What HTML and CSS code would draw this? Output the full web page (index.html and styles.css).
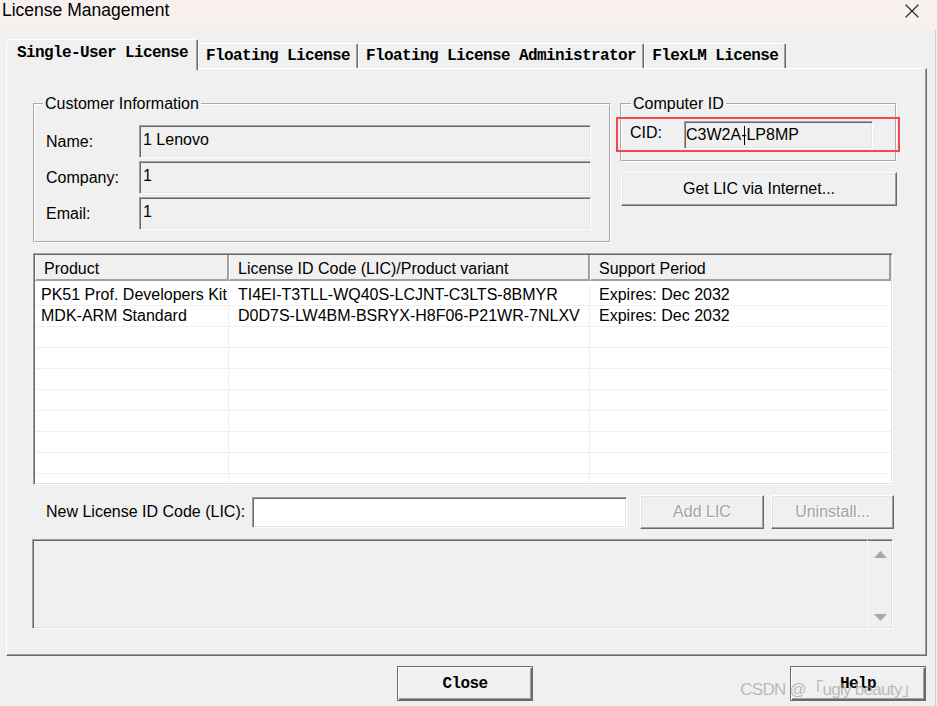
FILE: index.html
```html
<!DOCTYPE html>
<html lang="en">
<head>
<meta charset="utf-8">
<title>License Management</title>
<link rel="stylesheet" href="styles.css">
</head>
<body>
<div class="window">
  <header class="titlebar">
    <span class="title">License Management</span>
    <svg class="close-x" width="14" height="14" viewBox="0 0 14 14" aria-hidden="true"><path d="M0.6 0.6 L13.4 13.4 M13.4 0.6 L0.6 13.4" stroke="#1a1a1a" stroke-width="1.3" fill="none"/></svg>
  </header>
  <div class="client">
    <nav class="tabs">
      <div class="tab active">Single-User License</div>
      <div class="tab">Floating License</div>
      <div class="tab">Floating License Administrator</div>
      <div class="tab">FlexLM License</div>
    </nav>
    <section class="panel">
      <div class="top-row">
        <fieldset class="group customer">
          <legend>Customer Information</legend>
          <div class="form-row"><span class="lbl">Name:</span><div class="edit ro">1 Lenovo</div></div>
          <div class="form-row"><span class="lbl">Company:</span><div class="edit ro">1</div></div>
          <div class="form-row"><span class="lbl">Email:</span><div class="edit ro">1</div></div>
        </fieldset>
        <div class="right-col">
          <fieldset class="group computer">
            <legend>Computer ID</legend>
            <div class="cid-row">
              <span class="lbl cid-lbl">CID:</span>
              <div class="edit ro cid">C3W2A-<span class="caret"></span>LP8MP</div>
              <div class="highlight"></div>
            </div>
          </fieldset>
          <div class="btn get-lic">Get LIC via Internet...</div>
        </div>
      </div>

      <div class="listview">
        <div class="lv-head">
          <div class="lv-h col-product">Product</div>
          <div class="lv-h col-lic">License ID Code (LIC)/Product variant</div>
          <div class="lv-h col-support">Support Period</div>
        </div>
        <div class="lv-body">
          <div class="lv-row"><div class="lv-c col-product">PK51 Prof. Developers Kit</div><div class="lv-c col-lic">TI4EI-T3TLL-WQ40S-LCJNT-C3LTS-8BMYR</div><div class="lv-c col-support">Expires: Dec 2032</div></div>
          <div class="lv-row"><div class="lv-c col-product">MDK-ARM Standard</div><div class="lv-c col-lic">D0D7S-LW4BM-BSRYX-H8F06-P21WR-7NLXV</div><div class="lv-c col-support">Expires: Dec 2032</div></div>
          <div class="lv-row"><div class="lv-c col-product"></div><div class="lv-c col-lic"></div><div class="lv-c col-support"></div></div>
          <div class="lv-row"><div class="lv-c col-product"></div><div class="lv-c col-lic"></div><div class="lv-c col-support"></div></div>
          <div class="lv-row"><div class="lv-c col-product"></div><div class="lv-c col-lic"></div><div class="lv-c col-support"></div></div>
          <div class="lv-row"><div class="lv-c col-product"></div><div class="lv-c col-lic"></div><div class="lv-c col-support"></div></div>
          <div class="lv-row"><div class="lv-c col-product"></div><div class="lv-c col-lic"></div><div class="lv-c col-support"></div></div>
          <div class="lv-row"><div class="lv-c col-product"></div><div class="lv-c col-lic"></div><div class="lv-c col-support"></div></div>
          <div class="lv-row"><div class="lv-c col-product"></div><div class="lv-c col-lic"></div><div class="lv-c col-support"></div></div>
          <div class="lv-row"><div class="lv-c col-product"></div><div class="lv-c col-lic"></div><div class="lv-c col-support"></div></div>
        </div>
      </div>

      <div class="lic-row">
        <span class="lic-label">New License ID Code (LIC):</span>
        <div class="edit lic-input"></div>
        <div class="btn small">Add LIC</div>
        <div class="btn small">Uninstall...</div>
      </div>

      <div class="msgbox">
        <div class="msg-text"></div>
        <div class="scroll">
          <svg width="13" height="7" viewBox="0 0 13 7" aria-hidden="true"><polygon points="6.5,0 13,7 0,7" fill="#a8a8a8"/></svg>
          <svg width="13" height="7" viewBox="0 0 13 7" aria-hidden="true"><polygon points="0,0 13,0 6.5,7" fill="#a8a8a8"/></svg>
        </div>
      </div>
    </section>

    <div class="footer">
      <div class="btn default">Close</div>
      <div class="btn default">Help</div>
    </div>
  </div>
  <div class="watermark">CSDN @「ugly beauty」</div>
</div>
</body>
</html>
```
FILE: styles.css
```css
* { box-sizing: border-box; }
html, body { margin: 0; padding: 0; }
body {
  width: 937px;
  height: 706px;
  overflow: hidden;
  background: #f0f0f0;
  font-family: "Liberation Sans", Arial, "Noto Sans CJK SC", sans-serif;
  font-size: 16px;
  color: #000;
}
.window {
  position: relative;
  width: 937px;
  height: 706px;
}

/* title bar */
.titlebar {
  height: 30px;
  background: #f8f0ee;
  display: flex;
  justify-content: space-between;
  align-items: flex-start;
  padding: 0 18px 0 2px;
}
.title {
  font-family: "Liberation Sans", Arial, sans-serif;
  font-size: 17.5px;
  line-height: 20px;
  color: #000;
}
.close-x { margin-top: 4px; }

/* client area */
.client {
  width: 936px;
  height: 676px;
  border-right: 1px solid #cfcfcf;
  padding: 9px 0 0 6px;
}

/* tabs */
.tabs {
  display: flex;
  align-items: flex-end;
  height: 29px;
}
.tab {
  height: 25px;
  display: flex;
  align-items: center;
  padding: 0 7px;
  font-family: "Liberation Mono", "Courier New", monospace;
  font-weight: bold;
  font-size: 16px;
  letter-spacing: -0.6px;
  white-space: nowrap;
  background: #f0f0f0;
  border-top: 1px solid #fff;
  border-left: 1px solid #fff;
  border-right: 1px solid #696969;
  box-shadow: inset -1px 0 0 #a0a0a0;
  border-radius: 2px 2px 0 0;
}
.tab.active {
  height: 31px;
  margin-bottom: -2px;
  padding: 0 9px 4px 10px;
  position: relative;
  z-index: 1;
}

/* tab panel */
.panel {
  width: 921px;
  height: 588px;
  border: 1px solid #fff;
  border-right-color: #696969;
  border-bottom-color: #696969;
  box-shadow: inset -1px -1px 0 #a0a0a0;
  padding: 26px 0 0 26px;
}
.top-row {
  display: flex;
  align-items: flex-start;
  gap: 9px;
}

/* group boxes */
.group {
  margin: 0;
  min-width: 0;
  border: 2px groove #fff;
}
.group legend {
  padding: 0 2px;
  font-size: 16px;
  line-height: 18px;
}
.customer {
  width: 578px;
  padding: 12px 18px 11px 11px;
}
.customer legend { margin-left: -3px; }
.form-row {
  display: flex;
  align-items: center;
  height: 33px;
}
.form-row + .form-row { margin-top: 3px; }
.lbl {
  flex: none;
  width: 93px;
}

/* edit boxes (sunken) */
.edit {
  flex: 1;
  height: 33px;
  display: flex;
  align-items: center;
  padding: 0 0 3px 3px;
  border: 1px solid;
  border-color: #a0a0a0 #fff #fff #a0a0a0;
  box-shadow: inset 1px 1px 0 #696969, inset -1px -1px 0 #e3e3e3;
  white-space: nowrap;
}
.edit.ro { background: #f0f0f0; }

.right-col {
  width: 277px;
  flex: none;
}
.computer {
  width: 277px;
  padding: 8px 22px 11px 8px;
}
.computer legend { margin-left: 1px; }
.cid-row {
  position: relative;
  display: flex;
  align-items: center;
  height: 28px;
}
.cid-lbl {
  width: 54px;
  padding-bottom: 4px;
}
.edit.cid {
  flex: none;
  width: 189px;
  height: 28px;
  padding: 0 0 0 1px;
}
.caret {
  display: inline-block;
  width: 1px;
  height: 19px;
  background: #000;
  margin: 0 1px 0 -2px;
}
.highlight {
  position: absolute;
  left: -14px;
  top: -4px;
  width: 284px;
  height: 35px;
  border: 2px solid #f24a4a;
}

/* raised buttons */
.btn {
  display: flex;
  align-items: center;
  justify-content: center;
  border: 1px solid;
  border-color: #fff #696969 #696969 #fff;
  box-shadow: inset -1px -1px 0 #a0a0a0, inset 1px 1px 0 #e3e3e3;
  background: #f0f0f0;
  white-space: nowrap;
}
.get-lic {
  margin: 10px 0 0 1px;
  height: 34px;
  width: 276px;
}

/* list view */
.listview {
  margin-top: 10px;
  width: 860px;
  height: 232px;
  padding: 1px;
  background: #fff;
  overflow: hidden;
  border: 1px solid;
  border-color: #a0a0a0 #fff #fff #a0a0a0;
  box-shadow: inset 1px 1px 0 #696969, inset -1px -1px 0 #e3e3e3;
}
.lv-head {
  display: flex;
  height: 26px;
  background: #f0f0f0;
}
.lv-h {
  display: flex;
  align-items: center;
  padding: 3px 0 0 8px;
  border-left: 1px solid #fff;
  border-right: 2px solid #a0a0a0;
  border-bottom: 2px solid #a0a0a0;
  white-space: nowrap;
}
.col-product { width: 194px; flex: none; }
.col-lic { width: 361px; flex: none; }
.col-support { flex: 1; }
.lv-body {
  padding-top: 4px;
}
.lv-row {
  display: flex;
  height: 21px;
  border-bottom: 1px solid #f0f0f0;
}
.lv-c {
  line-height: 20px;
  white-space: nowrap;
  overflow: hidden;
  border-right: 1px solid #f0f0f0;
}
.lv-c.col-product { padding-left: 6px; }
.lv-c.col-lic { padding-left: 9px; }
.lv-c.col-support { padding-left: 9px; border-right: 0; }

/* new LIC row */
.lic-row {
  display: flex;
  align-items: center;
  height: 34px;
  margin-top: 10px;
  padding-left: 13px;
}
.lic-label {
  flex: none;
  width: 206px;
  white-space: nowrap;
}
.edit.lic-input {
  flex: none;
  width: 375px;
  height: 31px;
  background: #fff;
}
.btn.small {
  width: 124px;
  height: 34px;
  margin-left: 13px;
  color: #a3a3a3;
  text-shadow: 1px 1px 0 #fff;
}
.btn.small + .btn.small {
  width: 123px;
  margin-left: 7px;
}

/* message box */
.msgbox {
  display: flex;
  margin: 10px 0 0 -1px;
  width: 861px;
  height: 90px;
  border: 1px solid;
  border-color: #a0a0a0 #fff #fff #a0a0a0;
  box-shadow: inset 1px 1px 0 #696969, inset -1px -1px 0 #e3e3e3;
}
.msg-text { flex: 1; }
.scroll {
  width: 25px;
  flex: none;
  display: flex;
  flex-direction: column;
  justify-content: space-between;
  align-items: center;
  padding: 11px 0 7px;
  border-left: 1px solid #f9f9f9;
}

/* footer buttons */
.footer {
  display: flex;
  gap: 257px;
  padding-left: 391px;
  margin-top: 10px;
}
.btn.default {
  width: 136px;
  height: 35px;
  padding-top: 1px;
  border: 1px solid #6b6b6b;
  box-shadow: inset 1px 1px 0 #fff, inset -1px -1px 0 #696969, inset -2px -2px 0 #a0a0a0;
  font-family: "Liberation Mono", "Courier New", monospace;
  font-weight: bold;
  font-size: 16px;
  letter-spacing: -0.6px;
}

/* watermark overlay */
.watermark {
  position: absolute;
  right: 19px;
  bottom: 6px;
  font-size: 17px;
  line-height: 20px;
  letter-spacing: -0.7px;
  color: rgba(160, 160, 160, 0.7);
  white-space: nowrap;
  font-family: "Liberation Sans", "Noto Sans CJK SC", sans-serif;
}
```
